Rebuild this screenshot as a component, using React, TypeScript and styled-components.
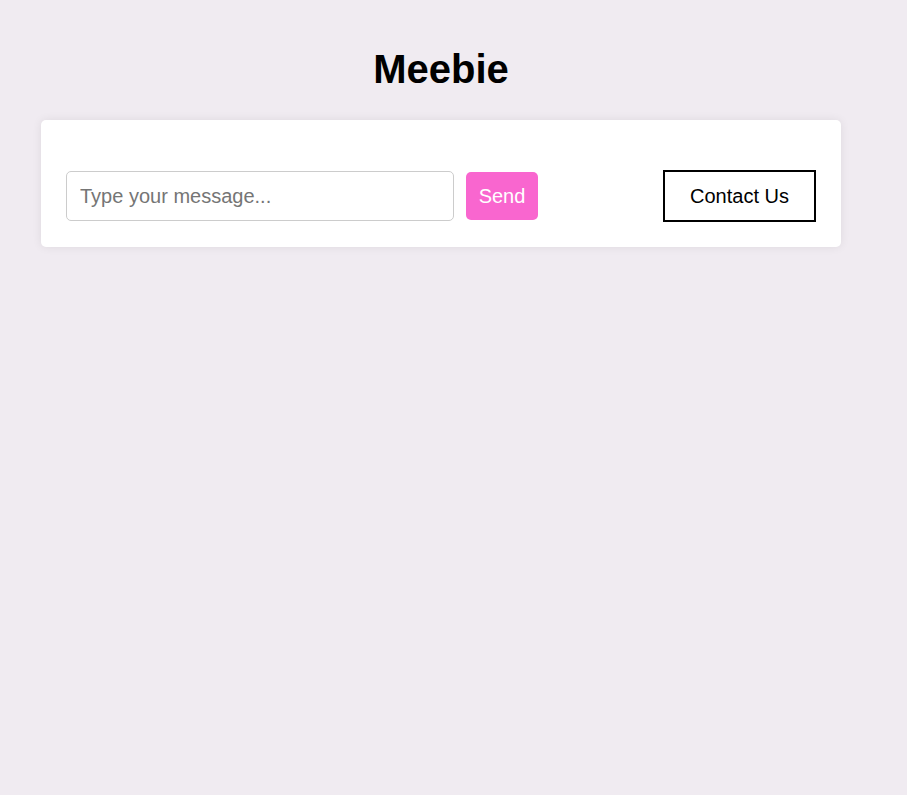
import React from "react";
import styled, { createGlobalStyle } from "styled-components";

const Global = createGlobalStyle`
  html, body { margin: 0; padding: 0; background: #f0ebf1; }
  body { font-family: "Liberation Sans", Arial, sans-serif; }
`;

const Page = styled.div`
  min-height: 795px;
  box-sizing: border-box;
  padding: 47px 0 0 41px;
  display: flex;
  flex-direction: column;
  align-items: flex-start;
`;

const Container = styled.div`
  width: 800px;
  display: flex;
  flex-direction: column;
  gap: 28px;
`;

const Title = styled.h1`
  margin: 0;
  font-size: 40px;
  font-weight: bold;
  text-align: center;
  color: #000;
  line-height: 45px;
`;

const Card = styled.div`
  background: #fff;
  border-radius: 5px;
  box-shadow: 0 0 10px rgba(0, 0, 0, 0.08);
  padding: 25px;
  display: flex;
  flex-direction: column;
`;

const Messages = styled.div`
  height: 25px;
`;

const Row = styled.div`
  display: flex;
  align-items: center;
  gap: 12px;
`;

const Input = styled.input`
  width: 388px;
  height: 50px;
  box-sizing: border-box;
  border: 1px solid #ccc;
  border-radius: 5px;
  padding: 0 13px;
  font-family: "Liberation Sans", Arial, sans-serif;
  font-size: 20px;
  color: #000;
  outline: none;
  &::placeholder { color: #757575; }
`;

const SendButton = styled.button`
  height: 48px;
  width: 72px;
  box-sizing: border-box;
  border: none;
  border-radius: 5px;
  background: #f966cf;
  color: #fff;
  font-family: "Liberation Sans", Arial, sans-serif;
  font-size: 20px;
  padding: 0;
  cursor: pointer;
`;

const ContactButton = styled.button`
  margin-left: auto;
  height: 52px;
  width: 153px;
  box-sizing: border-box;
  border: 2px solid #000;
  border-radius: 0;
  background: #fff;
  color: #000;
  font-family: "Liberation Sans", Arial, sans-serif;
  font-size: 20px;
  padding: 0;
  cursor: pointer;
`;

export default function App() {
  return (
    <>
      <Global />
      <Page>
        <Container>
          <Title>Meebie</Title>
          <Card>
            <Messages />
            <Row>
              <Input placeholder="Type your message..." />
              <SendButton>Send</SendButton>
              <ContactButton>Contact Us</ContactButton>
            </Row>
          </Card>
        </Container>
      </Page>
    </>
  );
}
